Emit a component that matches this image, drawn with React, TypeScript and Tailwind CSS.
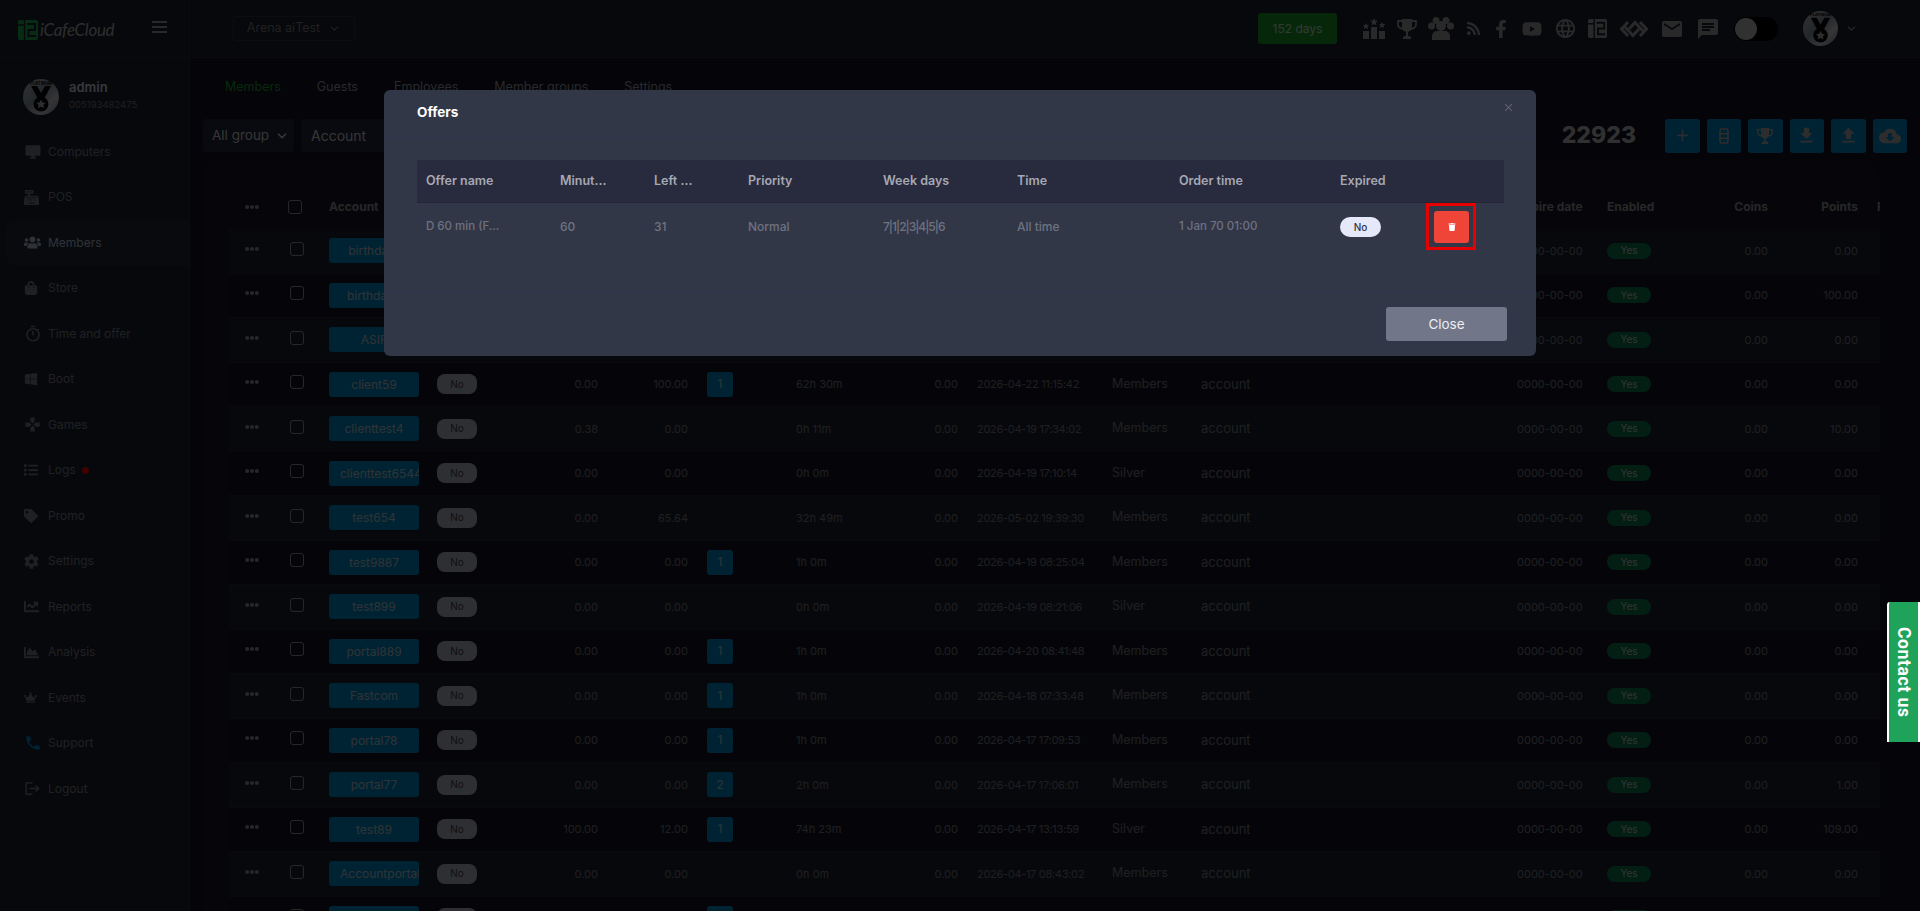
import React from 'react'
import { ChevronDown, Plus } from 'lucide-react'
import {
  FaCashRegister, FaChartArea, FaChartLine, FaCog, FaCrown, FaEllipsisH, FaFacebookF, FaList, FaRss, FaShoppingBag,
  FaTag, FaTrash, FaUsers, FaWindows, FaYoutube,
} from 'react-icons/fa'
import {
  MdChat, MdClose, MdCloudDownload, MdDesktopWindows, MdEmail, MdFileDownload, MdFileUpload, MdGames, MdLanguage, MdLogout, MdOutlineTimer, MdPhone,
} from 'react-icons/md'

type Member = {
  account: string
  balance: string
  bonus: string
  offers?: number
  time: string
  spent: string
  date: string
  group: string
  points: string
}

const members: Member[] = [
  { account: 'birthday1', balance: '0.00', bonus: '0.00', time: '0h 0m', spent: '0.00', date: '2026-04-25 10:12:20', group: 'Members', points: '0.00' },
  { account: 'birthday2', balance: '0.00', bonus: '0.00', time: '0h 0m', spent: '0.00', date: '2026-04-24 09:40:11', group: 'Members', points: '100.00' },
  { account: 'ASIF', balance: '0.00', bonus: '0.00', time: '0h 0m', spent: '0.00', date: '2026-04-23 16:02:37', group: 'Members', points: '0.00' },
  { account: 'client59', balance: '0.00', bonus: '100.00', offers: 1, time: '62h 30m', spent: '0.00', date: '2026-04-22 11:15:42', group: 'Members', points: '0.00' },
  { account: 'clienttest4', balance: '0.38', bonus: '0.00', time: '0h 11m', spent: '0.00', date: '2026-04-19 17:34:02', group: 'Members', points: '10.00' },
  { account: 'clienttest6544', balance: '0.00', bonus: '0.00', time: '0h 0m', spent: '0.00', date: '2026-04-19 17:10:14', group: 'Silver', points: '0.00' },
  { account: 'test654', balance: '0.00', bonus: '65.64', time: '32h 49m', spent: '0.00', date: '2026-05-02 19:39:30', group: 'Members', points: '0.00' },
  { account: 'test9887', balance: '0.00', bonus: '0.00', offers: 1, time: '1h 0m', spent: '0.00', date: '2026-04-19 08:25:04', group: 'Members', points: '0.00' },
  { account: 'test899', balance: '0.00', bonus: '0.00', time: '0h 0m', spent: '0.00', date: '2026-04-19 08:21:06', group: 'Silver', points: '0.00' },
  { account: 'portal889', balance: '0.00', bonus: '0.00', offers: 1, time: '1h 0m', spent: '0.00', date: '2026-04-20 08:41:48', group: 'Members', points: '0.00' },
  { account: 'Fastcom', balance: '0.00', bonus: '0.00', offers: 1, time: '1h 0m', spent: '0.00', date: '2026-04-18 07:33:48', group: 'Members', points: '0.00' },
  { account: 'portal78', balance: '0.00', bonus: '0.00', offers: 1, time: '1h 0m', spent: '0.00', date: '2026-04-17 17:09:53', group: 'Members', points: '0.00' },
  { account: 'portal77', balance: '0.00', bonus: '0.00', offers: 2, time: '2h 0m', spent: '0.00', date: '2026-04-17 17:06:01', group: 'Members', points: '1.00' },
  { account: 'test89', balance: '100.00', bonus: '12.00', offers: 1, time: '74h 23m', spent: '0.00', date: '2026-04-17 13:13:59', group: 'Silver', points: '109.00' },
  { account: 'Accountportal', balance: '0.00', bonus: '0.00', time: '0h 0m', spent: '0.00', date: '2026-04-17 08:43:02', group: 'Members', points: '0.00' },
  { account: 'portal76', balance: '0.00', bonus: '0.00', offers: 1, time: '1h 0m', spent: '0.00', date: '2026-04-17 08:20:19', group: 'Members', points: '0.00' },
]

const navItems = [
  { label: 'Computers', icon: <MdDesktopWindows size={18} /> },
  { label: 'POS', icon: <FaCashRegister size={15} /> },
  { label: 'Members', icon: <FaUsers size={17} />, active: true },
  { label: 'Store', icon: <FaShoppingBag size={14} /> },
  { label: 'Time and offer', icon: <MdOutlineTimer size={18} /> },
  { label: 'Boot', icon: <FaWindows size={14} /> },
  { label: 'Games', icon: <MdGames size={17} /> },
  { label: 'Logs', icon: <FaList size={14} />, dot: true },
  { label: 'Promo', icon: <FaTag size={14} /> },
  { label: 'Settings', icon: <FaCog size={15} /> },
  { label: 'Reports', icon: <FaChartLine size={15} /> },
  { label: 'Analysis', icon: <FaChartArea size={15} /> },
  { label: 'Events', icon: <FaCrown size={13} /> },
  { label: 'Support', icon: <MdPhone size={18} className="text-[#008acd]" /> },
  { label: 'Logout', icon: <MdLogout size={17} /> },
]

const rowGrid = 'grid grid-cols-[46px_44px_110px_56px_113px_90px_108px_84px_78px_154px_89px_316px_90px_83px_78px_90px_22px] items-center'
const offerGrid = 'grid grid-cols-[134px_94px_94px_135px_134px_162px_161px_103px_70px] items-center'

function Medal({ size }: { size: number }) {
  return (
    <svg width={size} height={size} viewBox="0 0 36 36">
      <defs>
        <linearGradient id="medalBg" x1="0" y1="0" x2="1" y2="1">
          <stop offset="0" stopColor="#c7c7d2" />
          <stop offset="0.45" stopColor="#8d9aa5" />
          <stop offset="0.7" stopColor="#d5cfd8" />
          <stop offset="1" stopColor="#8d8f98" />
        </linearGradient>
      </defs>
      <circle cx="18" cy="18" r="18" fill="url(#medalBg)" />
      <path d="M8 7h6l4 7 4-7h6l-7 13h-6z" fill="#0a0a0a" />
      <circle cx="18" cy="25" r="7.500" fill="#0a0a0a" />
      <path d="M18 20.500l1.400 2.900 3.200.4-2.300 2.200.6 3.200-2.900-1.600-2.900 1.600.6-3.200-2.300-2.200 3.200-.4z" fill="#b9b9c2" />
      <text x="18" y="5.500" textAnchor="middle" fontSize="4.200" fontWeight="700" fill="#0a0a0a">PLATINUM</text>
    </svg>
  )
}

function LogoMark({ size }: { size: number }) {
  const cut = '#1e2230'
  return (
    <svg width={size} height={size} viewBox="0 0 20 20" className="shrink-0">
      <rect width="20" height="20" rx="2" fill="currentColor" />
      <path d="M6.500 0v20M0 5h6.500" stroke={cut} strokeWidth="1.500" fill="none" />
      <path d="M9 4h8v6h-6.500v6H18" stroke={cut} strokeWidth="2" fill="none" />
    </svg>
  )
}

function PodiumIcon() {
  return (
    <svg width="22" height="21" viewBox="0 0 22 21" fill="currentColor">
      <rect x="0" y="13" width="6" height="8" />
      <rect x="8" y="9" width="6" height="12" />
      <rect x="16" y="13" width="6" height="8" />
      <path d="M11 0l1.200 2.500 2.700.3-2 1.900.5 2.700-2.400-1.300-2.400 1.300.5-2.700-2-1.900 2.700-.3z" />
      <path d="M3 5l1 2 2.200.3-1.600 1.500.4 2.200-2-1-2 1 .4-2.200L-.1 7.300 2 7z" />
      <path d="M19 4l1 2 2.200.3-1.600 1.500.4 2.200-2-1-2 1 .4-2.200-1.600-1.500L18 6z" />
    </svg>
  )
}

function TrophyIcon({ size }: { size: number }) {
  return (
    <svg width={size} height={size} viewBox="0 0 20 20" fill="currentColor">
      <path d="M5 0h10v8a5 5 0 0 1-10 0z" />
      <path d="M5 2H1v3.500C1 8 3 9.500 6 10M15 2h4v3.500c0 2.500-2 4-5 4.500" fill="none" stroke="currentColor" strokeWidth="1.800" />
      <rect x="9" y="12" width="2" height="5" />
      <path d="M5.500 20l1.500-3h6l1.500 3z" />
    </svg>
  )
}

function GroupIcon() {
  return (
    <svg width="26" height="23" viewBox="0 0 26 23" fill="currentColor">
      <circle cx="8" cy="3.500" r="3.500" />
      <circle cx="18" cy="3.500" r="3.500" />
      <circle cx="3.500" cy="9" r="3.500" />
      <circle cx="22.500" cy="9" r="3.500" />
      <circle cx="13" cy="9" r="5" />
      <path d="M4 23v-4a5 5 0 0 1 5-5h8a5 5 0 0 1 5 5v4z" />
    </svg>
  )
}

function ChainIcon() {
  return (
    <svg width="30" height="18" viewBox="0 0 30 18" fill="none" stroke="currentColor" strokeWidth="3">
      <path d="M9 2L2.500 9 9 16" />
      <path d="M21 2l6.500 7-6.500 7" />
      <path d="M10 9l6-6.500L24 11" />
      <path d="M6 7l8 8.500L20 9" />
    </svg>
  )
}

function SimIcon() {
  return (
    <svg width="10" height="16" viewBox="0 0 10 16" fill="none" stroke="currentColor" strokeWidth="1.600">
      <rect x="1" y="1" width="8" height="14" rx="1.500" />
      <path d="M1 5.700h8M1 10.300h8" />
    </svg>
  )
}

function Checkbox() {
  return <span className="block h-[14px] w-[14px] rounded-[3px] border-[1.5px] border-[#9c9c9c]" />
}

function Sidebar() {
  return (
    <aside className="w-[190px] shrink-0 border-r border-[#2c2f3a] bg-[#1e2230]">
      <div className="flex items-center gap-[10px] pl-[23px] pt-[21px] pb-[14px]">
        <Medal size={36} />
        <div className="-mt-[3px]">
          <div className="text-[13px] font-semibold leading-[18px] text-[#d8dbe4]">admin</div>
          <div className="text-[9.5px] leading-[18px] text-[#7a7c84]">005193482475</div>
        </div>
      </div>
      <nav>
        {navItems.map(item => (
          <div
            key={item.label}
            className={`flex h-[45.5px] items-center text-[12px] ${item.active ? 'ml-[5px] rounded-l-[14px] bg-[#262b3a] pl-[19px] text-[#b8c8dc]' : 'pl-[24px] text-[#7e808a]'}`}
          >
            <span className="flex w-[24px] justify-start">{item.icon}</span>
            <span>{item.label}</span>
            {item.dot && <span className="ml-[6px] h-[7px] w-[7px] rounded-full bg-[#ff0000]" />}
          </div>
        ))}
      </nav>
    </aside>
  )
}

function Header() {
  return (
    <header className="flex h-[58px] shrink-0 items-center border-b border-[#2c2f3a] bg-[#1e2230] text-[#a2a2a6]">
      <div className="flex h-full w-[190px] shrink-0 items-center border-r border-[#2c2f3a] pl-[18px] pt-[2px]">
        <span className="text-[#22b14c]"><LogoMark size={20} /></span>
        <span className="ml-[2px] font-['Lato',sans-serif] text-[17px] italic tracking-[-0.3px] text-[#b4b4b4]">iCafeCloud</span>
        <svg width="15" height="12" viewBox="0 0 15 12" className="-mt-[6px] ml-[38px]" fill="currentColor">
          <rect width="15" height="2" />
          <rect y="5" width="15" height="2" />
          <rect y="10" width="15" height="2" />
        </svg>
      </div>
      <div className="ml-[43px] flex h-[25px] w-[122px] items-center justify-center gap-[8px] rounded-[3px] border border-[#30334a] text-[12.5px] text-[#808080]">
        Arena aiTest <ChevronDown size={13} />
      </div>
      <div className="ml-auto flex items-center">
        <div className="flex h-[31px] w-[79px] items-center justify-center rounded-[3px] bg-[#1f9a2d] text-[12px] text-[#c8e6c8]">152 days</div>
        <div className="ml-[26px] flex w-[357px] items-center justify-between">
          <PodiumIcon />
          <TrophyIcon size={20} />
          <GroupIcon />
          <FaRss size={15} />
          <FaFacebookF size={18} />
          <FaYoutube size={20} />
          <MdLanguage size={23} />
          <LogoMark size={19} />
          <ChainIcon />
          <MdEmail size={24} />
          <MdChat size={24} />
        </div>
        <div className="ml-[14px] h-[24px] w-[44px] rounded-full bg-black p-[1px]">
          <div className="h-[22px] w-[22px] rounded-full bg-[#c4c4c8]" />
        </div>
        <div className="ml-[25px]"><Medal size={35} /></div>
        <ChevronDown size={13} className="ml-[7px] mr-[62px]" />
      </div>
    </header>
  )
}

function MemberRow({ member, odd }: { member: Member; odd: boolean }) {
  return (
    <div className={`${rowGrid} h-[44.5px] border-b border-[#292b36] text-[11px] text-[#7c7e84] ${odd ? 'bg-[#1e2230]' : 'bg-[#161726]'}`}>
      <span className="flex justify-center pb-[4px] text-[#9c9c9c]"><FaEllipsisH size={14} /></span>
      <span className="flex justify-center pb-[4px]"><Checkbox /></span>
      <span className="pl-[10px]">
        <span className="block h-[25px] w-[90px] overflow-hidden whitespace-nowrap rounded-[3px] bg-[#008acd] px-[11px] text-center text-[12px] leading-[25px] text-[#c0ccd2]">
          {member.account}
        </span>
      </span>
      <span className="pl-[8px]">
        <span className="flex h-[20px] w-[40px] items-center justify-center rounded-[8px] bg-[#b9bbc8] text-[10px] text-[#3c3d46]">No</span>
      </span>
      <span className="text-right">{member.balance}</span>
      <span className="text-right">{member.bonus}</span>
      <span className="pl-[19px]">
        {member.offers !== undefined && (
          <span className="flex h-[25px] w-[26px] items-center justify-center rounded-[3px] bg-[#008acd] text-[12px] text-[#c0ccd2]">{member.offers}</span>
        )}
      </span>
      <span>{member.time}</span>
      <span className="text-right">{member.spent}</span>
      <span className="whitespace-nowrap pl-[19px] tracking-[-0.3px]">{member.date}</span>
      <span className="text-[12.5px]">{member.group}</span>
      <span className="text-[13px]">account</span>
      <span>0000-00-00</span>
      <span>
        <span className="flex h-[16px] w-[44px] items-center justify-center rounded-full bg-[#0f7a4e] text-[10px] text-[#c2d0cc]">Yes</span>
      </span>
      <span className="text-right">0.00</span>
      <span className="text-right">{member.points}</span>
      <span />
    </div>
  )
}

function Main() {
  return (
    <main className="min-w-0 flex-1 pl-[13px] pr-[13px]">
      <div className="flex h-[60px] items-center gap-[36px] pb-[1px] pl-[22px] text-[12.5px] text-[#a0a2a8]">
        <span className="text-[#26a032]">Members</span>
        <span>Guests</span>
        <span>Employees</span>
        <span>Member groups</span>
        <span>Settings</span>
      </div>
      <div className="flex h-[35px] items-center">
        <div className="flex h-[33px] w-[91px] items-center justify-between rounded-[4px] bg-[#262840] pl-[9px] pr-[5px] text-[13.5px] text-[#d4d4d4]">
          All group <ChevronDown size={14} strokeWidth={3} />
        </div>
        <div className="ml-[7px] flex h-[33px] w-[130px] items-center rounded-[4px] bg-[#262840] pl-[10px] text-[14px] text-[#d4d4d4]">Account</div>
        <span className="ml-auto text-[23px] font-extrabold text-[#c0c0c0]">22923</span>
        <div className="ml-[29px] flex gap-[7px]">
          {[
            <Plus size={17} key="add" />,
            <SimIcon key="sim" />,
            <TrophyIcon size={16} key="trophy" />,
            <MdFileDownload size={21} key="down" />,
            <MdFileUpload size={21} key="up" />,
            <MdCloudDownload size={22} key="cloud" />,
          ].map(icon => (
            <span key={icon.key} className="flex h-[34px] w-[34.5px] items-center justify-center rounded-[3px] bg-[#008acd] text-[#b4b4b4]">{icon}</span>
          ))}
        </div>
      </div>
      <div className="mt-[14px] w-[1677px] rounded-t-[10px] bg-[#181929] pl-[26px] pt-[12px]">
        <div className={`${rowGrid} h-[50px] w-[1651px] pt-[6px] text-[12px] font-bold text-[#9a9a9a]`}>
          <span className="flex justify-center text-[#9c9c9c]"><FaEllipsisH size={14} /></span>
          <span className="flex justify-start pl-[13px]"><Checkbox /></span>
          <span className="pl-[10px]">Account</span>
          <span />
          <span />
          <span />
          <span />
          <span />
          <span />
          <span />
          <span />
          <span />
          <span className="whitespace-nowrap">Expire date</span>
          <span>Enabled</span>
          <span className="text-right">Coins</span>
          <span className="text-right">Points</span>
          <span className="overflow-hidden whitespace-nowrap pl-[19px]">Phone</span>
        </div>
        <div className="w-[1651px]">
          {members.map((member, i) => (
            <MemberRow key={member.account} member={member} odd={i % 2 === 0} />
          ))}
        </div>
      </div>
    </main>
  )
}

function OffersModal() {
  return (
    <div className="fixed inset-0 flex justify-center bg-[rgba(0,0,0,0.75)] pt-[90px]">
      <div className="h-[266px] w-[1152px] rounded-[6px] bg-[#323748] text-[#6f7280]">
        <div className="relative flex h-[48px] items-center border-b border-[#2f3350] pb-[2px] pl-[33px]">
          <h3 className="text-[13.5px] font-bold text-white">Offers</h3>
          <MdClose size={13} className="absolute right-[21px] top-[11px] text-[#5c6172]" />
        </div>
        <div className="h-[154px] border-b border-[#2f3350] pl-[33px] pt-[22px]">
          <div className={`${offerGrid} h-[43px] w-[1087px] border-b border-[#232537] bg-[#282a3d] text-[12.5px] font-semibold text-[#a6a8b3]`}>
            {['Offer name', 'Minut...', 'Left ...', 'Priority', 'Week days', 'Time', 'Order time', 'Expired', ''].map(label => (
              <span key={label} className="pl-[9px]">{label}</span>
            ))}
          </div>
          <div className={`${offerGrid} h-[48px] w-[1087px] text-[12px] font-medium`}>
            <span className="pl-[9px] text-[11.5px]">D 60 min (F...</span>
            <span className="pl-[9px]">60</span>
            <span className="pl-[9px]">31</span>
            <span className="pl-[9px]">Normal</span>
            <span className="pl-[9px] tracking-[-1px]">7|1|2|3|4|5|6</span>
            <span className="pl-[9px]">All time</span>
            <span className="pl-[9px] text-[11.5px]">1 Jan 70 01:00</span>
            <span className="pl-[9px]">
              <span className="flex h-[20px] w-[41px] items-center justify-center rounded-full bg-[#e4e8f8] text-[10px] text-[#33374a]">No</span>
            </span>
            <span className="relative block h-[32px] w-[35px]">
              <span className="flex h-[32px] w-[35px] items-center justify-center rounded-[3px] bg-[#ef4539] text-white"><FaTrash size={8} /></span>
              <span className="absolute -bottom-[7px] -left-[8px] -right-[7px] -top-[8px] border-[3px] border-[#e60000]" />
            </span>
          </div>
        </div>
        <div className="flex justify-end pr-[29px] pt-[15px]">
          <button type="button" className="h-[34px] w-[121px] rounded-[3px] bg-[#717688] text-[13.5px] text-[#eceef2]">Close</button>
        </div>
      </div>
    </div>
  )
}

function ContactTab() {
  return (
    <div className="fixed right-0 top-[602px] flex h-[140px] w-[33px] items-center justify-center rounded-tl-[3px] border-y-[2px] border-l-[2px] border-white bg-[#1fa35a] font-['Roboto',sans-serif] text-[17.5px] font-bold tracking-[0.6px] text-white [writing-mode:vertical-rl]">
      Contact us
    </div>
  )
}

export default function App() {
  return (
    <div className="flex h-screen flex-col overflow-hidden bg-[#121224] font-[Inter,sans-serif]">
      <Header />
      <div className="flex min-h-0 flex-1">
        <Sidebar />
        <Main />
      </div>
      <OffersModal />
      <ContactTab />
    </div>
  )
}
